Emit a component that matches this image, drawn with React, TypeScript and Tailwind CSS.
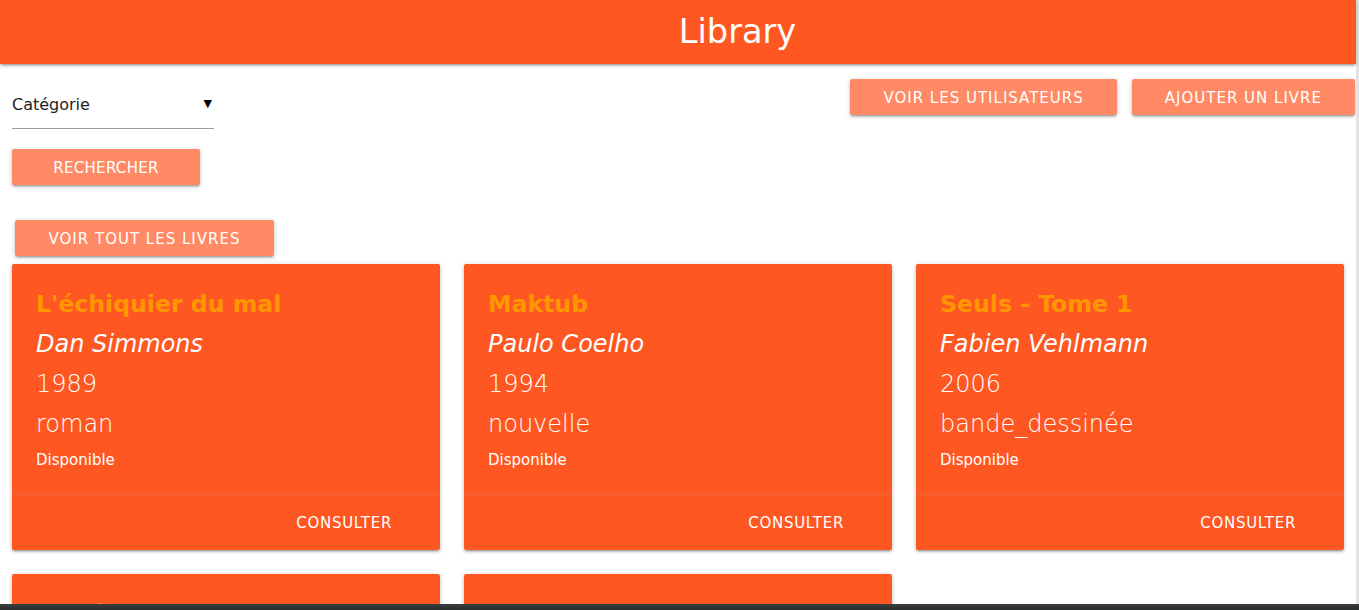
import React from "react";

interface Book {
  title: string;
  author: string;
  year: string;
  category: string;
  status: string;
}

const books: Book[] = [
  { title: "L'échiquier du mal", author: "Dan Simmons", year: "1989", category: "roman", status: "Disponible" },
  { title: "Maktub", author: "Paulo Coelho", year: "1994", category: "nouvelle", status: "Disponible" },
  { title: "Seuls - Tome 1", author: "Fabien Vehlmann", year: "2006", category: "bande_dessinée", status: "Disponible" },
  { title: "Hypérion", author: "Dan Simmons", year: "1989", category: "roman", status: "Disponible" },
  { title: "L'Alchimiste", author: "Paulo Coelho", year: "1988", category: "roman", status: "Disponible" },
];

const font = { fontFamily: '"DejaVu Sans", "Liberation Sans", sans-serif' };

function Btn({ children, className = "" }: { children: React.ReactNode; className?: string }) {
  return (
    <button
      className={`h-9 pt-[2px] rounded-[2px] bg-[#ff8a65] text-white text-[15px] uppercase shadow-[0_2px_2px_0_rgba(0,0,0,0.14),0_3px_1px_-2px_rgba(0,0,0,0.12),0_1px_5px_0_rgba(0,0,0,0.2)] ${className}`}
    >
      {children}
    </button>
  );
}

function BookCard({ book }: { book: Book }) {
  return (
    <div className="bg-[#ff5722] rounded-[2px] shadow-[0_2px_2px_0_rgba(0,0,0,0.14),0_3px_1px_-2px_rgba(0,0,0,0.12),0_1px_5px_0_rgba(0,0,0,0.2)]">
      <div className="px-6 pt-6 pb-[23px]">
        <div className="text-[23.6px] leading-8 font-bold text-[#ff9800] mb-2">{book.title}</div>
        <div className="text-[24px] leading-8 italic text-white mb-2">{book.author}</div>
        <div className="text-[24px] leading-8 font-extralight text-white mb-2">{book.year}</div>
        <div className="text-[24px] leading-8 font-extralight text-white mb-2">{book.category}</div>
        <div className="text-[15px] leading-[22px] pt-px text-white">{book.status}</div>
      </div>
      <div className="border-t border-[rgba(160,160,160,0.2)] h-14 flex items-center justify-end pr-12 pt-[2px]">
        <span className="text-[15px] text-white uppercase tracking-[0.7px]">Consulter</span>
      </div>
    </div>
  );
}

export default function App() {
  return (
    <div className="h-[610px] w-full overflow-hidden flex bg-white" style={font}>
      <div className="flex-1 min-w-0">
        {/* Navbar */}
        <nav className="h-16 bg-[#ff5722] flex items-center justify-center pl-[119px] shadow-[0_2px_2px_0_rgba(0,0,0,0.14),0_3px_1px_-2px_rgba(0,0,0,0.12),0_1px_5px_0_rgba(0,0,0,0.2)] relative z-10">
          <span className="text-white text-[33.6px] leading-none">Library</span>
        </nav>

        {/* Filters + actions */}
        <div className="flex justify-between">
          <div className="pl-3 pt-[17px]">
            <div className="w-[202px] h-12 border-b border-[#9e9e9e] flex items-center justify-between pr-[2px]">
              <span className="text-[16px] text-[#222]">Catégorie</span>
              <span className="text-[11px] text-black">▼</span>
            </div>
            <Btn className="w-[188px] mt-[20px] tracking-[0.3px]">Rechercher</Btn>
          </div>
          <div className="flex gap-[15px] pt-[15px] pr-[1px] items-start">
            <Btn className="px-[33px] tracking-[1px]">Voir les utilisateurs</Btn>
            <Btn className="px-[33px] tracking-[1px]">Ajouter un livre</Btn>
          </div>
        </div>

        <div className="pl-[15px] mt-[35px]">
          <Btn className="w-[259px] tracking-[1px]">Voir tout les livres</Btn>
        </div>

        {/* Book grid */}
        <div className="grid grid-cols-3 gap-6 px-3 mt-2">
          {books.map((book, i) => (
            <BookCard key={i} book={book} />
          ))}
        </div>
      </div>

      {/* scrollbar strip */}
      <div className="w-[3px] bg-[#e4e4e4]" />

      {/* desktop taskbar edge */}
      <div className="fixed left-0 right-0 top-[604px] h-[6px] bg-gradient-to-b from-[#3a3d3e] to-[#2b2e2f] z-20" />
    </div>
  );
}
